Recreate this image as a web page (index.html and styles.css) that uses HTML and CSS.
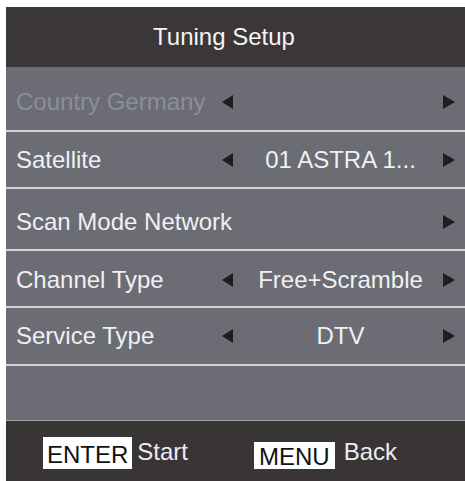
FILE: index.html
```html
<!DOCTYPE html>
<html>
<head>
<meta charset="utf-8">
<link rel="stylesheet" href="styles.css">
</head>
<body>
<div class="panel">
  <div class="header">Tuning Setup</div>
  <div class="row r1 disabled">
    <span class="label">Country Germany</span>
    <span class="arrow left"></span>
    <span class="value"></span>
    <span class="arrow right"></span>
  </div>
  <div class="row r2">
    <span class="label">Satellite</span>
    <span class="arrow left"></span>
    <span class="value">01 ASTRA 1...</span>
    <span class="arrow right"></span>
  </div>
  <div class="row r3">
    <span class="label">Scan Mode Network</span>
    <span class="noarrow"></span>
    <span class="value"></span>
    <span class="arrow right"></span>
  </div>
  <div class="row r4">
    <span class="label">Channel Type</span>
    <span class="arrow left"></span>
    <span class="value">Free+Scramble</span>
    <span class="arrow right"></span>
  </div>
  <div class="row r5">
    <span class="label">Service Type</span>
    <span class="arrow left"></span>
    <span class="value">DTV</span>
    <span class="arrow right"></span>
  </div>
  <div class="row r6"></div>
  <div class="footer">
    <span class="key key-enter">ENTER</span>
    <span class="hint">Start</span>
    <span class="key key-menu">MENU</span>
    <span class="hint hint-back">Back</span>
  </div>
</div>
</body>
</html>
```
FILE: styles.css
```css
html, body {
  margin: 0;
  padding: 0;
  background: #ffffff;
}
body {
  width: 465px;
  height: 481px;
  overflow: hidden;
  font-family: "Liberation Sans", Arial, sans-serif;
}
.panel {
  margin: 7px 0 0 6px;
  width: 460px;
  display: flex;
  flex-direction: column;
}
.header {
  height: 60px;
  background: #3b3739;
  color: #f4f4f4;
  font-size: 24px;
  display: flex;
  align-items: center;
  justify-content: center;
  padding-right: 24px;
}
.row {
  display: grid;
  grid-template-columns: 206px 12px 1fr 13px;
  align-items: center;
  padding: 0 10px;
  background: #6b6c74;
  color: #f0f0f2;
  font-size: 24px;
  white-space: nowrap;
  border-top: 2px solid #d4d4d9;
}
.r1 { height: 63px; border-top: none; padding-top: 6px; box-sizing: border-box; }
.r2 { height: 55px; }
.r3 { height: 60px; padding-top: 5px; box-sizing: content-box; height: 55px; }
.r4 { height: 55px; padding-top: 2px; box-sizing: content-box; height: 53px; }
.r5 { height: 56px; }
.r6 { height: 54px; border-bottom: 1px solid #a3a3a8; }
.disabled .label { color: #8c8f98; }
.label {
  overflow: visible;
}
.value {
  text-align: center;
  padding-left: 4px;
}
.arrow {
  width: 0;
  height: 0;
  border-top: 7px solid transparent;
  border-bottom: 7px solid transparent;
}
.arrow.left {
  border-right: 11px solid #1d1d24;
}
.arrow.right {
  border-left: 12px solid #1d1d24;
}
.footer {
  height: 60px;
  background: #393537;
  display: flex;
  align-items: flex-start;
  padding: 16px 0 0 37px;
  font-size: 24px;
  box-sizing: border-box;
  height: 61px;
}
.key {
  background: #ffffff;
  color: #111111;
  padding: 4px 4px 0;
  line-height: 28px;
  height: 28px;
}
.key-menu {
  margin-top: 5px;
  margin-left: 66px;
  padding: 2px 5px 0;
  line-height: 25px;
  height: 25px;
}
.hint {
  color: #ececee;
  line-height: 24px;
  margin-top: 3px;
  margin-left: 5px;
}
.hint-back {
  margin-left: 9px;
}
```
